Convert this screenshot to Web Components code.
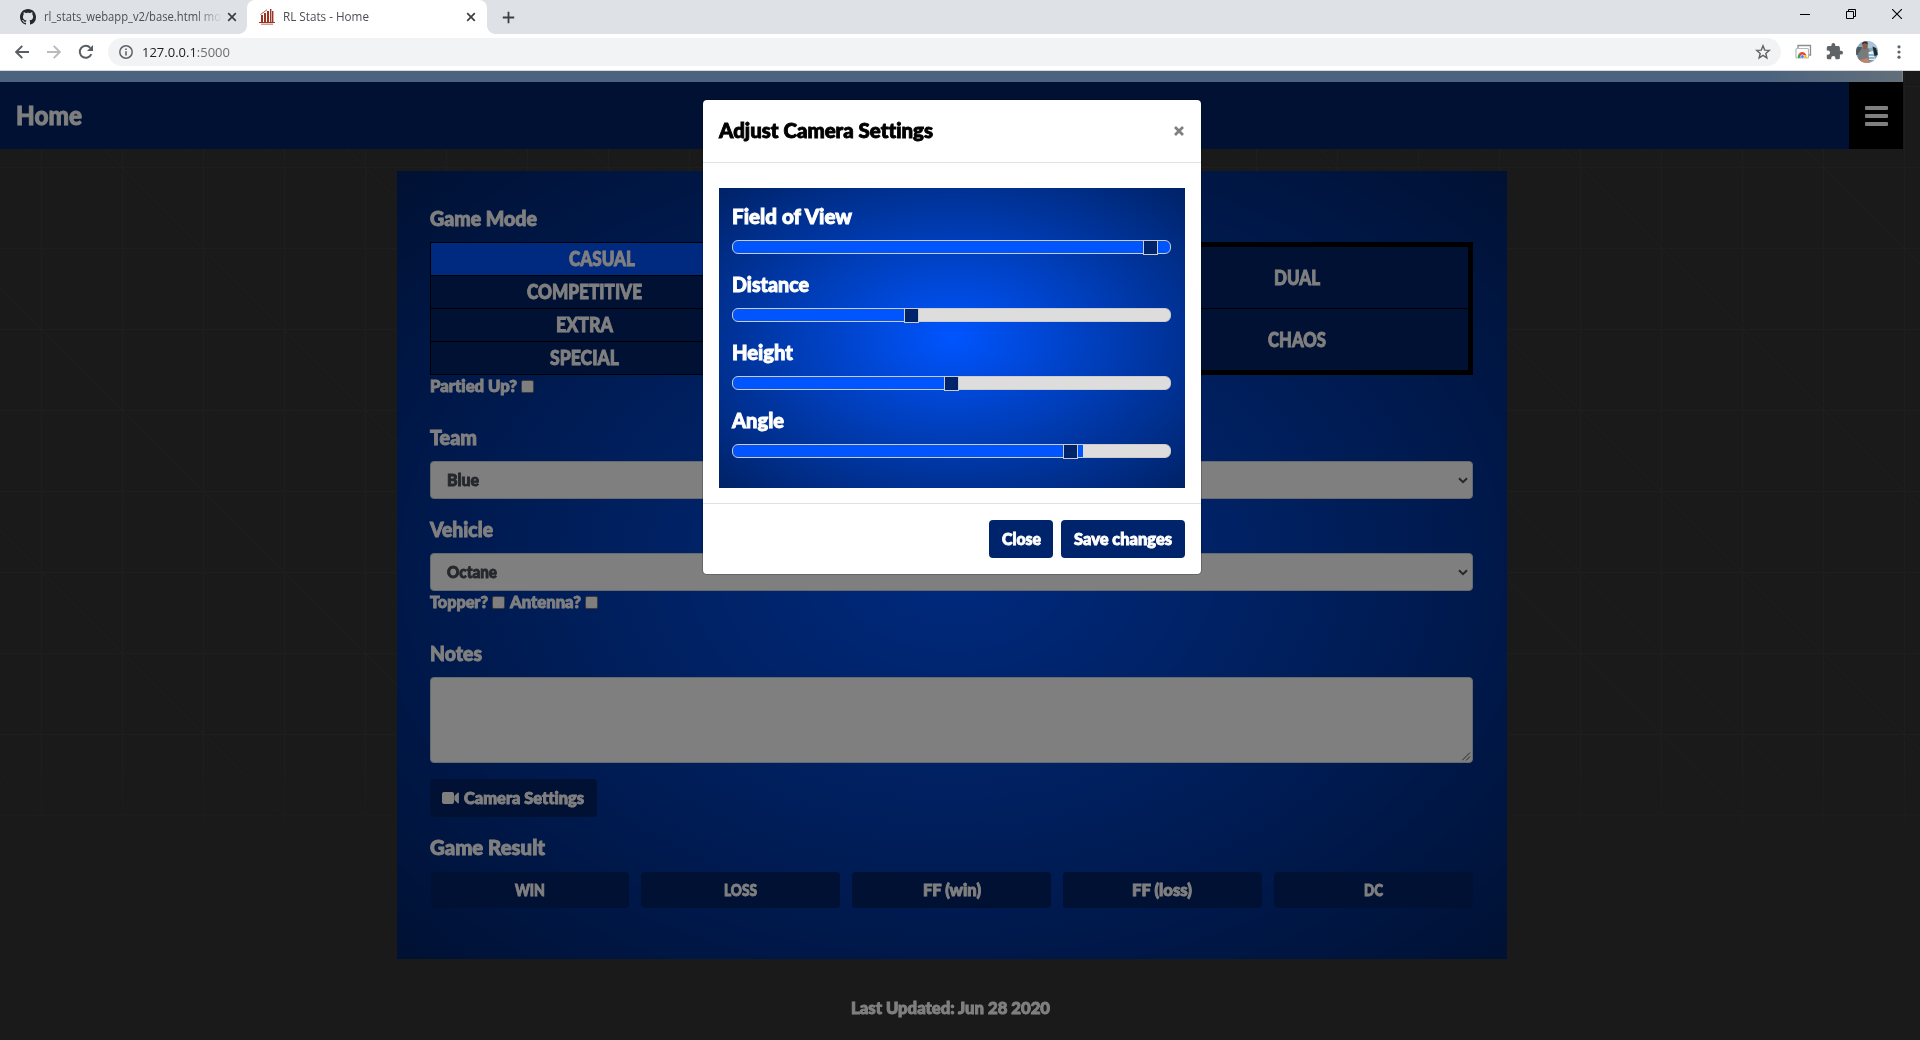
<!DOCTYPE html>
<html lang="en">
<head>
<meta charset="utf-8">
<title>RL Stats - Home</title>
<style>
html,body{margin:0;height:100%;overflow:hidden}
body{font-family:Lato,"Open Sans",sans-serif;font-weight:900;font-variant-ligatures:none;-webkit-text-stroke:.9px currentColor;display:flex;flex-direction:column}
</style>
</head>
<body>
<browser-chrome></browser-chrome>
<page-view>
  <site-bar></site-bar>
  <game-form></game-form>
  <page-footer></page-footer>
  <camera-modal slot="overlay"></camera-modal>
</page-view>
<script>
const define = (name, html, setup) => customElements.define(name, class extends HTMLElement {
  constructor() {
    super();
    this.attachShadow({mode: 'open'}).innerHTML = html;
  }
  connectedCallback() { if (setup) setup(this, this.shadowRoot); }
});

define('browser-chrome', `
<style>
:host{display:block;flex:none;height:71px;font-family:"Open Sans","Noto Sans",sans-serif;font-weight:400;-webkit-text-stroke:0;background:#fff;box-sizing:border-box;border-bottom:1px solid #d5d9dc}
.tabs{height:34px;background:#dee1e6;display:flex}
.tab{display:flex;align-items:center;height:34px;box-sizing:border-box;color:#4b4f54}
.t1{width:247px;padding-left:20px}
.t2{width:240px;background:#fff;border-radius:8px 8px 0 0;padding-left:12px;position:relative}
.t2:before,.t2:after{content:"";position:absolute;bottom:0;width:8px;height:8px}
.t2:before{left:-8px;background:radial-gradient(circle at 0 0,transparent 7.5px,#fff 8px)}
.t2:after{right:-8px;background:radial-gradient(circle at 100% 0,transparent 7.5px,#fff 8px)}
.fade{width:177px;margin-left:8px;-webkit-mask-image:linear-gradient(90deg,#000 152px,transparent 178px)}
svg{display:block;flex:none}
.tab svg{margin-top:-1px}
.plus{margin:11px 0 0 15px}
.win{margin-left:auto;display:flex;padding:9px 18px 0 0;gap:36px}
.bar{height:35px;display:flex;align-items:center;box-sizing:border-box}
.omni{flex:1;height:28px;background:#f1f3f4;border-radius:14px;display:flex;align-items:center;margin:0 14px 0 14px;padding:0 10px 0 11px;box-sizing:border-box;color:#202124}
.omni svg:last-child{margin-left:auto}
i{font-style:normal;color:#6b6f74}
</style>
<div class="tabs">
 <div class="tab t1">
  <svg width="16" height="16" viewBox="0 0 16 16"><path fill="#24292e" d="M8 0C3.58 0 0 3.58 0 8c0 3.54 2.29 6.53 5.47 7.59.4.07.55-.17.55-.38 0-.19-.01-.82-.01-1.49-2.01.37-2.53-.49-2.69-.94-.09-.23-.48-.94-.82-1.13-.28-.15-.68-.52-.01-.53.63-.01 1.08.58 1.23.82.72 1.21 1.87.87 2.33.66.07-.52.28-.87.51-1.07-1.78-.2-3.64-.89-3.64-3.95 0-.87.31-1.59.82-2.15-.08-.2-.36-1.02.08-2.12 0 0 .67-.21 2.2.82.64-.18 1.32-.27 2-.27s1.36.09 2 .27c1.53-1.04 2.2-.82 2.2-.82.44 1.1.16 1.92.08 2.12.51.56.82 1.27.82 2.15 0 3.07-1.87 3.75-3.65 3.95.29.25.54.73.54 1.48 0 1.07-.01 1.93-.01 2.2 0 .21.15.46.55.38A8.01 8.01 0 0 0 16 8c0-4.42-3.58-8-8-8z"/></svg>
  <div class="fade"><fit-text w="177" s="12" l="18">rl_stats_webapp_v2/base.html mo</fit-text></div>
  <svg width="10" height="10" style="margin-left:6px" viewBox="0 0 10 10"><path d="M1.200 1.200l7.600 7.600M8.800 1.200L1.200 8.800" stroke="#3c4043" stroke-width="1.700"/></svg>
 </div>
 <div class="tab t2">
  <svg width="16" height="16" viewBox="0 0 16 16"><path fill="#9b3423" d="M2 6h2v7H2zM5 4h2v9H5zM8 2h2v11H8zM11 0h1.400v13H11zM13 2h1.400v11H13zM0 13h16v1H0z"/><path d="M1.500 5.500L5 3l3-2.400" stroke="#9b3423" stroke-width=".8" fill="none"/><path d="M2 15.200h12" stroke="#c58a7d" stroke-width="1.300"/></svg>
  <fit-text w="86" s="12" l="18" style="margin-left:8px">RL Stats - Home</fit-text>
  <svg width="10" height="10" style="margin-left:auto;margin-right:11px" viewBox="0 0 10 10"><path d="M1.200 1.200l7.600 7.600M8.800 1.200L1.200 8.800" stroke="#3c4043" stroke-width="1.700"/></svg>
 </div>
 <svg class="plus" width="13" height="13" viewBox="0 0 13 13"><path d="M6.500 .8v11.400M.8 6.500h11.400" stroke="#3c4043" stroke-width="1.800"/></svg>
 <div class="win">
  <svg width="10" height="10" viewBox="0 0 10 10"><path d="M0 5.500h10" stroke="#000"/></svg>
  <svg width="10" height="10" viewBox="0 0 10 10" fill="none" stroke="#000"><path d="M.5 2.500h7v7h-7zM2.500 2.500v-2h7v7h-2"/></svg>
  <svg width="10" height="10" viewBox="0 0 10 10"><path d="M0 0l10 10M10 0L0 10" stroke="#000" stroke-width="1.100"/></svg>
 </div>
</div>
<div class="bar">
 <svg width="14" height="14" style="margin-left:15px" viewBox="0 0 14 14" fill="none" stroke="#5a5e63" stroke-width="1.900"><path d="M14 7H1.600M7.300 .8L1.200 7l6.100 6.200"/></svg>
 <svg width="14" height="14" style="margin-left:18px" viewBox="0 0 14 14" fill="none" stroke="#b9bbbd" stroke-width="1.900"><path d="M0 7h12.400M6.700 .8L12.800 7l-6.100 6.200"/></svg>
 <svg width="16" height="16" style="margin-left:17px" viewBox="0 0 16 16"><path d="M13.300 10.100A6 6 0 1 1 12.300 3.800" fill="none" stroke="#5a5e63" stroke-width="2"/><path d="M15 1v6H9z" fill="#5a5e63"/></svg>
 <div class="omni">
  <svg width="14" height="14" viewBox="0 0 14 14"><circle cx="7" cy="7" r="6.200" fill="none" stroke="#5f6368" stroke-width="1.500"/><path d="M6.200 6.200h1.600v4.200H6.200zM6.200 3.500h1.600v1.600H6.200z" fill="#5f6368"/></svg>
  <fit-text w="88" s="13.500" l="20" style="margin-left:8.500px">127.0.0.1<i>:5000</i></fit-text>
  <svg width="16" height="16" viewBox="0 0 16 16"><path d="M8 1.800l1.700 4.300 4.600.3-3.500 3 1.100 4.500L8 11.400l-3.900 2.500 1.100-4.500-3.500-3 4.600-.3z" fill="none" stroke="#5f6368" stroke-width="1.400"/></svg>
 </div>
 <svg width="17" height="16" viewBox="0 0 17 16"><path d="M3 4V1.500h12.500V11H13" fill="none" stroke="#8b8d8f" stroke-width="1.300"/><rect x="1" y="4.500" width="12.500" height="9.500" rx="1" fill="#fff" stroke="#b5b7b9" stroke-width="1.200"/><path d="M3 14a4.300 4.300 0 0 1 .9-4.300L6.200 13v1z" fill="#34a853"/><path d="M3.700 9.900a4.300 4.300 0 0 1 7.600 1.100H7.200L5.400 12.200z" fill="#ea4335"/><path d="M8 14l1.400-3h2a4.300 4.300 0 0 1 .1 3z" fill="#fbbc05"/><circle cx="7.400" cy="12.600" r="1.800" fill="#4285f4" stroke="#fff" stroke-width=".5"/></svg>
 <svg width="17" height="17" style="margin-left:14px" viewBox="1 1 22 22"><path fill="#5f6368" d="M20.500 11H19V7a2 2 0 0 0-2-2h-4V3.500a2.500 2.500 0 0 0-5 0V5H4a2 2 0 0 0-2 2v3.800h1.500a2.700 2.700 0 0 1 0 5.400H2V20a2 2 0 0 0 2 2h3.800v-1.500a2.700 2.700 0 0 1 5.400 0V22H17a2 2 0 0 0 2-2v-4h1.500a2.500 2.500 0 0 0 0-5z"/></svg>
 <svg width="22" height="22" style="margin:0 19px 0 13px" viewBox="0 0 22 22"><defs><clipPath id="a"><circle cx="11" cy="11" r="11"/></clipPath></defs><g clip-path="url(#a)"><path fill="#87a7ba" d="M0 0h22v22H0z"/><path fill="#4d5a61" d="M0 6h6v8H0z"/><path fill="#a9c6d6" d="M12 0h10v7H12z"/><path fill="#777b7d" d="M2 13l4-6h6l3 5v8H2z"/><ellipse cx="9" cy="4.800" rx="2.600" ry="3.800" fill="#8e5d4a"/><path fill="#3b2a25" d="M6 3.500c0-4.500 6-4.500 6 0L9 2z"/><path fill="#e9eff2" d="M12.500 11l4.500-1 2 9h-6z"/><path fill="#1d2a33" d="M16.500 5.500l3.500 1.500 2 7-3.500 1z"/><path d="M12.500 14h5.500M12.500 17h5.500" stroke="#2e7ca5"/><path fill="#c08467" d="M4 19l8-2 2 5H4z"/></g></svg>
 <svg width="4" height="14" style="margin-right:19.500px" viewBox="0 0 4 14" fill="#5f6368"><circle cx="2" cy="1.800" r="1.600"/><circle cx="2" cy="7" r="1.600"/><circle cx="2" cy="12.200" r="1.600"/></svg>
</div>`);

define('page-view', `
<style>
:host{display:block;position:relative;flex:1;overflow:hidden;background:#343434}
.grid{position:absolute;inset:0;width:100%;height:800px;-webkit-mask-image:linear-gradient(#000 700px,transparent)}
.content{position:relative;width:1903px}
.shade{position:absolute;inset:0;background:rgba(0,0,0,.5)}
</style>
<svg class="grid"><defs><pattern id="p" x="41" y="96" width="243" height="243" patternUnits="userSpaceOnUse">
<path d="M.5 0v243M81.500 0v243M162.500 0v243M0 .5h243M0 81.500h243M0 162.500h243" stroke="#3c3c3c"/>
<path d="M81 0l162 162M0 162l81 81" stroke="#3c3c3c" fill="none"/>
<path d="M0 0l243 243M162 0l81 81M0 81l162 162" stroke="#383838" fill="none"/></pattern></defs><rect width="100%" height="100%" fill="url(#p)"/></svg>
<div class="content"><slot></slot></div>
<div class="shade"></div>
<slot name="overlay"></slot>`);

define('site-bar', `
<style>
:host{display:block;color:#fff}
.strip{height:11px;box-sizing:border-box;border-right:1px solid #fff;background:linear-gradient(100deg,#96c6fe 0,#96c6fe 92.500%,#cbe0f2 101%)}
.bar{height:67px;background:#002266;display:flex;justify-content:space-between}
.title{padding:16px 0 0 16px}
.menu{width:54px;background:#000;display:flex;flex-direction:column;align-items:center;justify-content:center;gap:4px}
.menu b{width:23px;height:4px;border-radius:1px;background:#fff}
</style>
<div class="strip"></div>
<div class="bar"><fit-text class="title" w="66" s="27" l="34">Home</fit-text><div class="menu"><b></b><b></b><b></b></div></div>`);

define('field-heading', `
<style>:host{display:block;height:24px}</style>
<fit-text s="20.500" l="24"><slot></slot></fit-text>`);

define('mode-cell', `
<style>
:host{display:flex;flex:1;align-items:center;justify-content:center;background:#002266;box-sizing:border-box;padding-bottom:2px}
:host([active]){background:#0055ff;padding-left:34px}
</style><slot></slot>`);

define('check-item', `
<style>
:host{display:flex;height:23px}
.box{width:13px;height:13px;box-sizing:border-box;border:1px solid #767676;border-radius:2px;background:#fff;margin:5px 5px 0 4px}
</style><slot></slot><span class="box"></span>`);

define('select-box', `
<style>
:host{display:flex;align-items:center;justify-content:space-between;height:38px;box-sizing:border-box;border:1px solid #ced4da;border-radius:4px;background:#fff;color:#495057;padding:0 4px 0 16px}
</style><slot></slot><svg width="10" height="7" viewBox="0 0 10 7"><path d="M1 1.200l4 4 4-4" fill="none" stroke="#495057" stroke-width="2"/></svg>`);

define('rl-button', `
<style>
:host{display:flex;align-items:center;justify-content:center;height:38px;box-sizing:border-box;border-radius:4px;background:#00246b;color:#fff}
</style><slot></slot>`);

define('game-form', `
<style>
:host{display:block;box-sizing:border-box;width:1110px;height:788px;margin:22px 0 0 397px;padding:35px 34px 0 33px;color:#fff;background:radial-gradient(#0055ff,#002266)}
.modes{display:flex;height:133px;margin-top:12px;background:#000}
.col{display:flex;flex-direction:column;gap:1px;box-sizing:border-box}
.a{width:309px;padding:1px}
.b{flex:1;padding:5px}
.c{width:353px;padding:5px}
.checks{display:flex}
.gap{margin-top:27px}.g2{margin-top:18px}
select-box{margin-top:12px}
.notes{margin-top:12px;height:86px;box-sizing:border-box;border:1px solid #ced4da;border-radius:4px;background:#fff;display:flex;align-items:flex-end;justify-content:flex-end}
.cam{width:167px;margin-top:16px;gap:5px;background:#002266;justify-content:flex-start;padding-left:12px}
.res{display:flex;gap:12.5px;margin:13px .5px 0 .5px}
.res rl-button{flex:1;height:36px;background:#002266}
</style>
<field-heading w="107">Game Mode</field-heading>
<div class="modes">
 <div class="col a">
  <mode-cell active><fit-text w="66" s="20.500" l="24">CASUAL</fit-text></mode-cell>
  <mode-cell><fit-text w="115" s="20.500" l="24">COMPETITIVE</fit-text></mode-cell>
  <mode-cell><fit-text w="57" s="20.500" l="24">EXTRA</fit-text></mode-cell>
  <mode-cell><fit-text w="69" s="20.500" l="24">SPECIAL</fit-text></mode-cell>
 </div>
 <div class="col b"><mode-cell></mode-cell></div>
 <div class="col c">
  <mode-cell><fit-text w="46" s="20.500" l="24">DUAL</fit-text></mode-cell>
  <mode-cell><fit-text w="58" s="20.500" l="24">CHAOS</fit-text></mode-cell>
 </div>
</div>
<check-item><fit-text w="87" s="16.500" l="23">Partied Up?</fit-text></check-item>
<field-heading class="gap" w="47">Team</field-heading>
<select-box><fit-text w="32" s="16.500" l="24">Blue</fit-text></select-box>
<field-heading class="g2" w="63">Vehicle</field-heading>
<select-box><fit-text w="50" s="16.500" l="24">Octane</fit-text></select-box>
<div class="checks"><check-item><fit-text w="58" s="16.500" l="23">Topper?</fit-text></check-item><check-item><fit-text w="71" s="16.500" l="23">Antenna?</fit-text></check-item></div>
<field-heading class="gap" w="52">Notes</field-heading>
<div class="notes"><svg width="10" height="10" viewBox="0 0 10 10"><path d="M0 8.500L8 .5M4 8.500l4-4" stroke="#555" fill="none"/></svg></div>
<rl-button class="cam"><svg width="17" height="12" viewBox="0 0 17 12" fill="#fff"><rect width="12" height="12" rx="2"/><path d="M12.400 4L15.700 .8c.5-.4 1.200-.2 1.200.5v9.400c0 .7-.7.900-1.200.5l-3.300-3.200z"/></svg><fit-text w="120" s="16.500" l="24">Camera Settings</fit-text></rl-button>
<field-heading class="g2" w="115">Game Result</field-heading>
<div class="res">
 <rl-button><fit-text w="30" s="16.500" l="24">WIN</fit-text></rl-button>
 <rl-button><fit-text w="33" s="16.500" l="24">LOSS</fit-text></rl-button>
 <rl-button><fit-text w="58" s="16.500" l="24">FF (win)</fit-text></rl-button>
 <rl-button><fit-text w="60" s="16.500" l="24">FF (loss)</fit-text></rl-button>
 <rl-button><fit-text w="19" s="16.500" l="24">DC</fit-text></rl-button>
</div>`);

define('page-footer', `
<style>:host{display:flex;justify-content:center;margin-top:38px;color:#fff;padding-right:2px}</style>
<fit-text w="199" s="16.500" l="23">Last Updated: Jun 28 2020</fit-text>`);

define('range-row', `
<style>
:host{display:block;height:68px}
.track{width:439px;height:14px;margin:12px 0 0;box-sizing:border-box;border:1px solid #ccc;border-radius:6px;position:relative}
.thumb{position:absolute;top:-1px;width:15px;height:15px;box-sizing:border-box;background:#00246b;border:1px solid #ccc}
</style>
<field-heading><slot></slot></field-heading>
<div class="track"><div class="thumb"></div></div>`, (el, root) => {
  const fill = el.getAttribute('fill');
  root.querySelector('.track').style.background = 'linear-gradient(90deg,#0055ff ' + fill + 'px,#ddd ' + fill + 'px)';
  root.querySelector('.thumb').style.left = el.getAttribute('thumb') + 'px';
  root.querySelector('field-heading').setAttribute('w', el.getAttribute('w'));
});

define('camera-modal', `
<style>
:host{display:block;position:absolute;left:702px;top:28px;width:500px;box-sizing:border-box;border:1px solid rgba(0,0,0,.2);border-radius:5px;background:#fff;background-clip:padding-box;color:#fff}
header{display:flex;justify-content:space-between;color:#000;border-bottom:1px solid #dee2e6;padding:18px 17px 0 16px;box-sizing:border-box;height:63px}
header svg{margin-top:8px}
.panel{margin:25px 16px 15px;height:300px;box-sizing:border-box;padding:16px 14px 0 13px;background:radial-gradient(#0055ff,#002266)}
footer{border-top:1px solid #dee2e6;height:71px;box-sizing:border-box;display:flex;justify-content:flex-end;gap:8px;padding:16px}
</style>
<header><fit-text w="214" s="20.500" l="24">Adjust Camera Settings</fit-text><svg width="10" height="10" viewBox="0 0 10 10"><path d="M1 1l8 8M9 1L1 9" stroke="#7f7f7f" stroke-width="2.700"/></svg></header>
<div class="panel">
 <range-row w="120" fill="440" thumb="410">Field of View</range-row>
 <range-row w="77" fill="180" thumb="171">Distance</range-row>
 <range-row w="61" fill="219" thumb="211">Height</range-row>
 <range-row w="52" fill="350" thumb="330">Angle</range-row>
</div>
<footer><rl-button style="width:64px"><fit-text w="39" s="16.500" l="24">Close</fit-text></rl-button><rl-button style="width:124px"><fit-text w="98" s="16.500" l="24">Save changes</fit-text></rl-button></footer>`);

/* Text condensed horizontally to a given advance width: w = width, s = font size, l = line height. */
define('fit-text', `
<style>
:host{display:block;flex:none;white-space:nowrap}
span{display:inline-block;transform-origin:0 50%}
</style><span><slot></slot></span>`, (el, root) => {
  const span = root.querySelector('span');
  const host = el.getRootNode().host;
  const w = +(el.getAttribute('w') || (host && host.getAttribute('w')));
  el.style.fontSize = el.getAttribute('s') + 'px';
  el.style.lineHeight = el.getAttribute('l') + 'px';
  el.style.height = el.getAttribute('l') + 'px';
  const natural = span.getBoundingClientRect().width;
  el.style.width = w + 'px';
  span.style.transform = 'scaleX(' + w / natural + ')';
});
</script>
</body>
</html>
